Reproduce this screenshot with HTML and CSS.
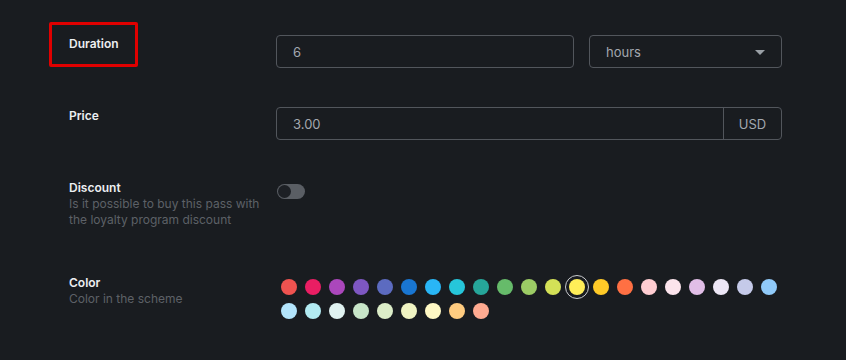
FILE: index.html
```html
<!DOCTYPE html>
<html lang="en">
<head>
  <meta charset="UTF-8">
  <title>Pass settings</title>
  <link rel="stylesheet" href="styles.css">
</head>
<body>
  <div class="form">
    <div class="row">
      <div class="label"><span class="title highlight">Duration</span></div>
      <div class="field split">
        <div class="input grow">6</div>
        <div class="input select">hours<span class="caret"></span></div>
      </div>
    </div>

    <div class="row">
      <div class="label"><span class="title">Price</span></div>
      <div class="field">
        <div class="input group">
          <span class="grow">3.00</span>
          <span class="addon">USD</span>
        </div>
      </div>
    </div>

    <div class="row row-tall">
      <div class="label">
        <span class="title">Discount</span>
        <span class="hint">Is it possible to buy this pass with the loyalty program discount</span>
      </div>
      <div class="field">
        <span class="toggle"><span class="knob"></span></span>
      </div>
    </div>

    <div class="row">
      <div class="label">
        <span class="title">Color</span>
        <span class="hint">Color in the scheme</span>
      </div>
      <div class="field">
        <div class="swatches" id="swatches"></div>
      </div>
    </div>
  </div>

  <script>
    // material palette used for the scheme
    const colors = ["#ef5350","#e91e63","#ab47bc","#7e57c2","#5c6bc0","#1976d2","#29b6f6","#26c6da",
      "#26a69a","#66bb6a","#9ccc65","#d4e157","#ffee58","#ffca28","#ff7043","#ffcdd2","#fce4ec",
      "#e1bee7","#ede7f6","#c5cae9","#90caf9","#b3e5fc","#b2ebf2","#e0f2f1","#c8e6c9","#dcedc8",
      "#f0f4c3","#fff9c4","#ffcc80","#ffab91"];
    const selected = 12;
    const box = document.getElementById('swatches');
    colors.forEach((c, i) => {
      const dot = document.createElement('span');
      dot.className = 'dot' + (i === selected ? ' active' : '');
      dot.style.background = c;
      box.appendChild(dot);
    });
  </script>
</body>
</html>
```

FILE: styles.css
```css
body { background: #191c20; margin: 0; font-family: Inter, "Noto Sans", sans-serif; color: #e8eaed;}
.form { padding: 35px 0 0 69px; width: 713px;}
.row { display: grid; grid-template-columns: 207px 506px; margin-bottom: 39px;}
.row-tall { margin-bottom: 46px;}
.label { display: flex; flex-direction: column; font-size: 12px; line-height: 16px; padding-top: 1px;}
.title { font-weight: 600; color: #eceef1; align-self: flex-start;}
.hint { color: #5d6167; width: 195px;}
.highlight { position: relative;}
.highlight::before { content: ""; position: absolute; top: -14px; bottom: -15px; left: -20px; right: -19px; border: 3px solid #e00000; border-radius: 2px;}
.field { display: flex;}
.split { gap: 15px;}
.grow { flex: 1;}
.input { box-sizing: border-box; height: 33px; border: 1px solid #52565c; border-radius: 4px; display: flex; align-items: center; padding-left: 16px; font-size: 13px; color: #a3a8af;}
.select { width: 193px; position: relative;}
.caret { position: absolute; right: 16px; top: 14px; border-left: 5px solid transparent; border-right: 5px solid transparent; border-top: 5px solid #9aa0a6;}
.group { flex: 1; padding-left: 16px;}
.addon { height: 100%; width: 57px; border-left: 1px solid #52565c; display: flex; align-items: center; justify-content: center;}
.toggle { margin: 5px 0 0 1px; width: 28px; height: 15px; border-radius: 8px; background: #5a5e64; position: relative;}
.knob { position: absolute; left: 1px; top: 1px; width: 13px; height: 13px; border-radius: 50%; background: #1d2025;}
.swatches { display: flex; flex-wrap: wrap; gap: 8px; width: 500px; margin: 5px 0 0 5px;}
.dot { width: 16px; height: 16px; border-radius: 50%; position: relative;}
.dot.active::after { content: ""; position: absolute; inset: -4px; border: 1.5px solid #c9cbcf; border-radius: 50%;}
```
